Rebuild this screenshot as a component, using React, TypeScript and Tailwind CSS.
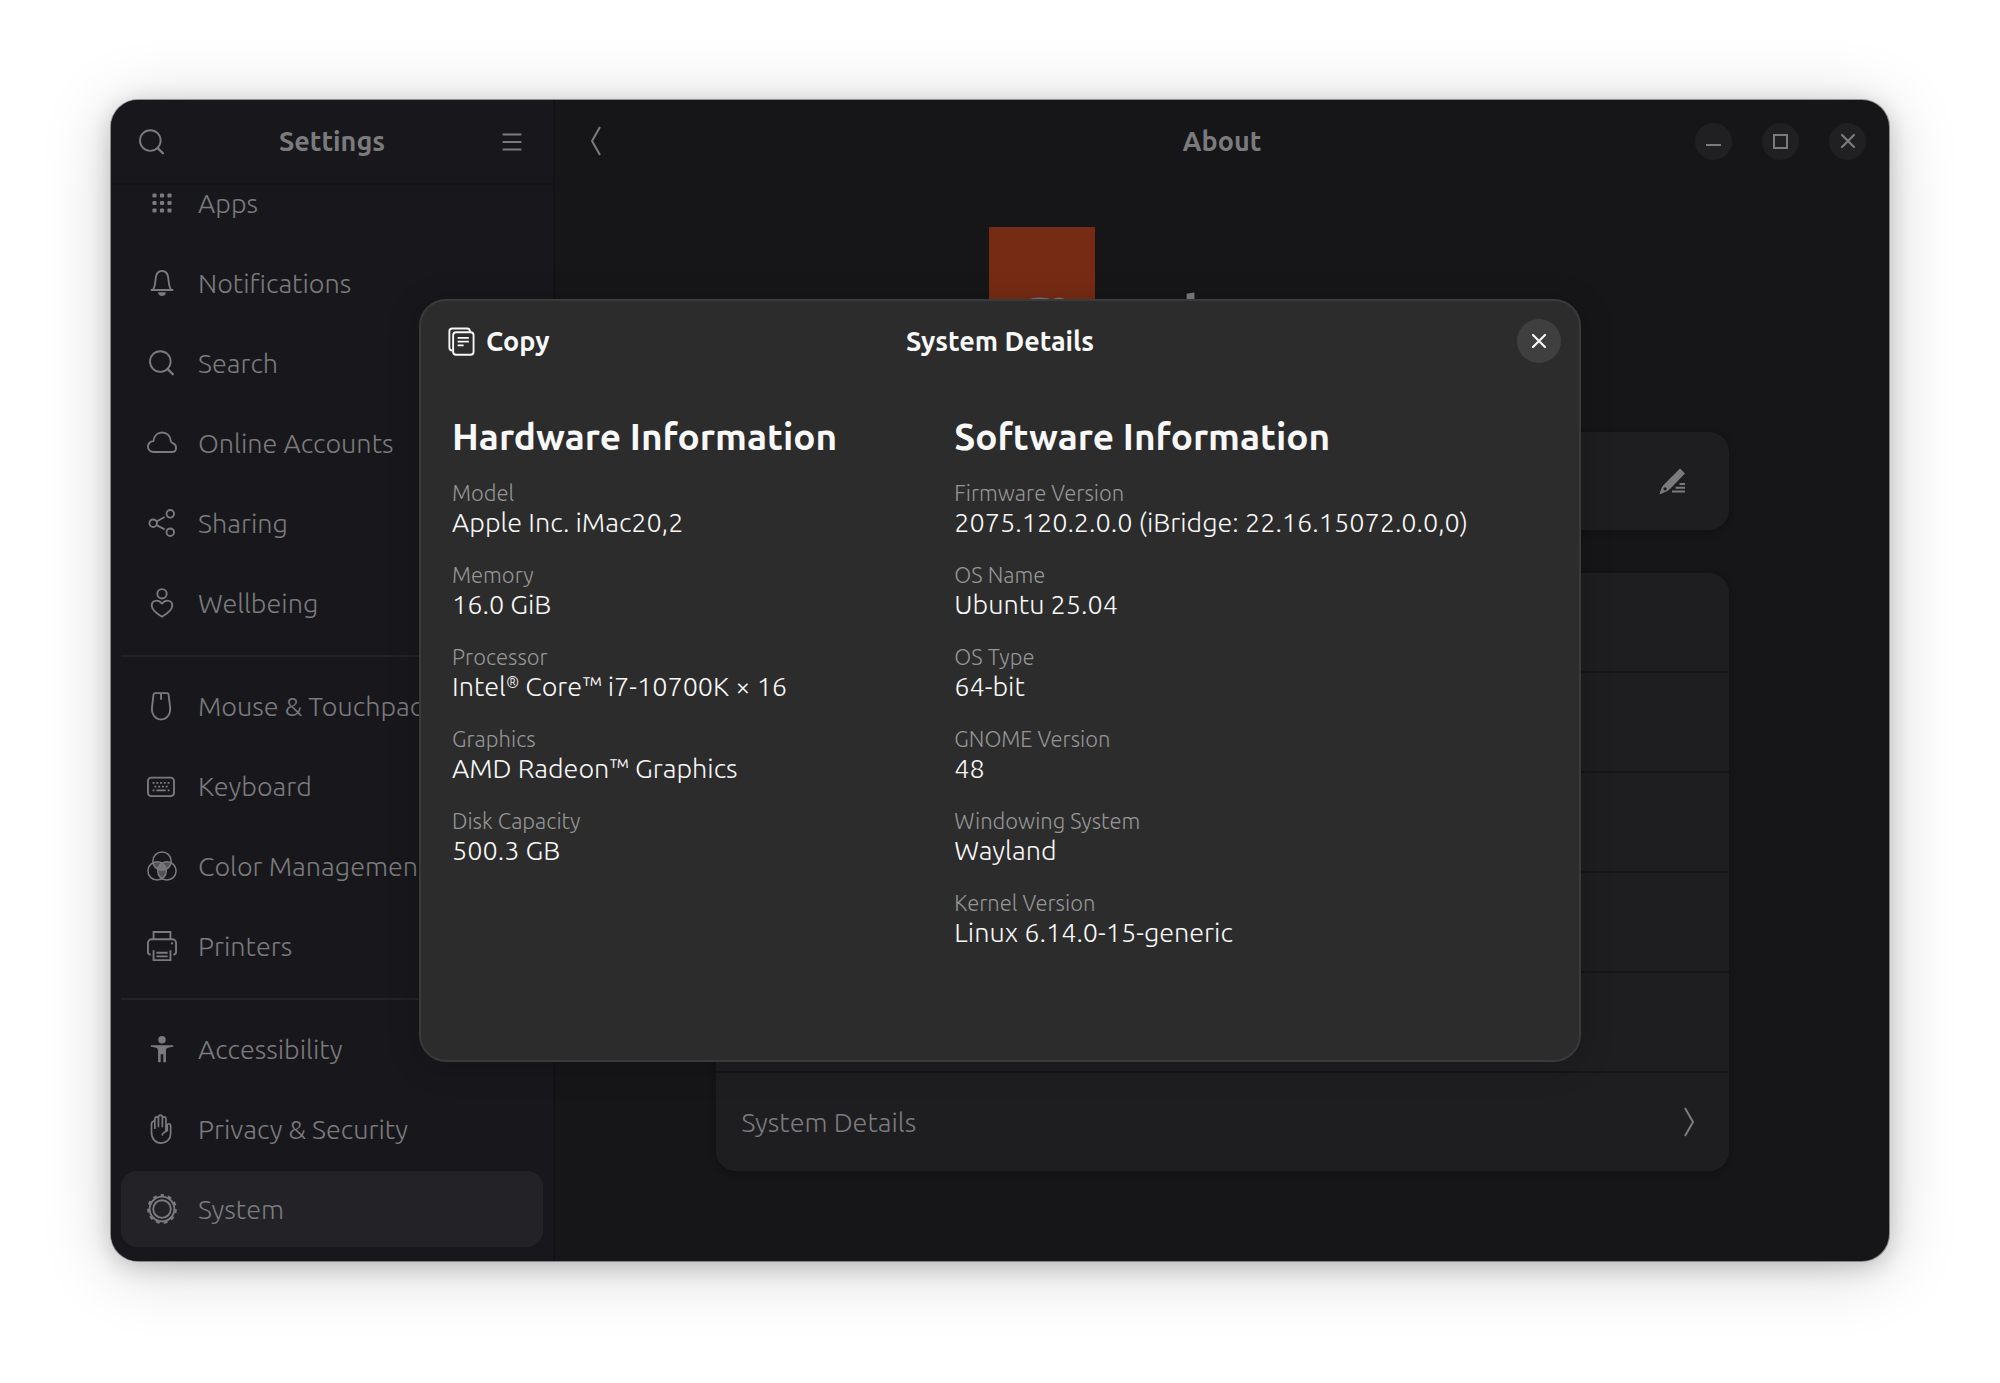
import type { ReactNode } from 'react';

function Icon({ children }: { children: ReactNode }) {
  return (
    <svg viewBox="0 0 16 16" fill="none" stroke="currentColor" strokeWidth="1" aria-hidden="true" className="size-[30px] shrink-0">
      {children}
    </svg>
  );
}

const SearchIcon = () => (
  <Icon>
    <circle cx="7.1" cy="7.2" r="5.5" />
    <path d="M11 11.2l2.8 2.8" strokeWidth="1.3" strokeLinecap="round" />
  </Icon>
);

const AppsIcon = () => (
  <Icon>
    {[4, 8, 12].map((y) => [4, 8, 12].map((x) => (
      <rect key={`${x}-${y}`} x={x - 1.1} y={y - 1.1} width="2.2" height="2.2" rx=".6" fill="currentColor" stroke="none" />
    )))}
  </Icon>
);

const BellIcon = () => (
  <Icon>
    <path d="M2 11.7h12M3.2 11.5C4.5 9.8 4.4 7 4.7 5 5 2.8 6.3 1.6 8 1.6S11 2.8 11.3 5c.3 2 .2 4.8 1.5 6.5" />
    <path d="M5.9 12.9h4.2c0 1.2-.9 2-2.1 2s-2.1-.8-2.1-2z" fill="currentColor" stroke="none" />
  </Icon>
);

const CloudIcon = () => (
  <Icon>
    <path d="M3.4 12.8a2.9 2.9 0 0 1 0-5.8C3.7 4.2 5.6 2.4 8 2.4c2.7 0 4.6 1.9 4.7 4.6.1.5.4.7 1.1 1.1 1 .5 1.7 1.2 1.7 2.4 0 1.4-1 2.3-2.3 2.3z" strokeLinejoin="round" />
  </Icon>
);

const ShareIcon = () => (
  <Icon>
    <circle cx="3.3" cy="8.1" r="2" />
    <circle cx="12.4" cy="3.1" r="2" />
    <circle cx="12.4" cy="12.9" r="2" />
    <path d="M5.1 7.2l4.3-2.4M5.1 9.1l4.3 2.3" />
  </Icon>
);

const WellbeingIcon = () => (
  <Icon>
    <circle cx="8" cy="3.1" r="2.5" />
    <path d="M8 15.3C5.6 13.9 2.5 11.8 2.5 9.3c0-1.5 1.1-2.6 2.6-2.6 1.2 0 2.1.6 2.9 1.6.8-1 1.7-1.6 2.9-1.6 1.5 0 2.6 1.1 2.6 2.6 0 2.5-3.1 4.6-5.5 6z" strokeLinejoin="round" />
  </Icon>
);

const MouseIcon = () => (
  <Icon>
    <path d="M4.3 1.1h6.4q.7 0 .8.8l.8 6.6c.5 4-1.9 6.7-4.8 6.7s-5.3-2.7-4.8-6.7l.8-6.6q.1-.8.8-.8zM7.5 1v3.7" />
  </Icon>
);

const KeyboardIcon = () => (
  <Icon>
    <rect x=".5" y="3.5" width="13.9" height="9.9" rx="1.8" />
    <path d="M3 6.3h1m1 0h1m1 0h1m1 0h1m1 0h1M4 8.3h1m1 0h1m1 0h1m1 0h1M3 10.3h1m1 0h5m1 0h1" />
  </Icon>
);

const ColorIcon = () => (
  <Icon>
    <clipPath id="colorTop"><circle cx="8" cy="5.4" r="4.9" /></clipPath>
    <clipPath id="colorLeft"><circle cx="5.4" cy="10.6" r="4.9" /></clipPath>
    <g fill="currentColor" fillOpacity=".6" stroke="none">
      <circle cx="5.4" cy="10.6" r="4.9" clipPath="url(#colorTop)" />
      <circle cx="10.6" cy="10.6" r="4.9" clipPath="url(#colorTop)" />
      <circle cx="10.6" cy="10.6" r="4.9" clipPath="url(#colorLeft)" />
    </g>
    <g strokeWidth=".8">
      <circle cx="8" cy="5.4" r="4.9" />
      <circle cx="5.4" cy="10.6" r="4.9" />
      <circle cx="10.6" cy="10.6" r="4.9" />
    </g>
  </Icon>
);

const PrinterIcon = () => (
  <Icon>
    <path d="M3.5 4.4V.5h9v3.9M2 12.6c-.9 0-1.5-.6-1.5-1.5V6.4c0-1.1.9-2 2-2h11c1.1 0 2 .9 2 2v4.7c0 .9-.6 1.5-1.5 1.5M3.5 10.2v5.3h9v-5.3M5 11.6h6M5 13.5h6" />
    <circle cx="13.3" cy="6.6" r=".6" fill="currentColor" stroke="none" />
  </Icon>
);

const AccessibilityIcon = () => (
  <Icon>
    <g fill="currentColor" stroke="none">
      <circle cx="8" cy="3" r="2" />
      <path d="M2 6h12v.8c-1.5.2-3 .4-3.5.9-.4.4-.4 1-.4 1.8V15H8.7v-4.2H7.3V15H5.9V9.5c0-.8 0-1.4-.4-1.8C5 7.2 3.5 7 2 6.8z" />
    </g>
  </Icon>
);

const HandIcon = () => (
  <Icon>
    <path
      d="M4.2 8V3.6c-1 .1-1.8.7-1.8 1.7v4.6c0 3.3 2.1 5.6 5.1 5.6s5.1-2.1 5.1-5V6.3c0-.7-.4-1.1-.9-1.1s-.9.4-.9 1.1v2.5L8.9 10c-.5.3-.8.8-.8 1.5M4.2 8V2.6c0-.7.4-1.1.9-1.1s1 .4 1 1.1V7M6.100 7V1.700c0-.7.4-1.1 1-1.1s1.1.4 1.1 1.1V7M8.2 2.5c0-.6.4-1 1-1s.9.4.9 1.1v6.2"
      strokeWidth=".9"
    />
  </Icon>
);

const GearIcon = () => (
  <Icon>
    <circle cx="8" cy="8" r="6.6" />
    <circle cx="8" cy="8" r="7.3" strokeWidth="1.3" strokeDasharray="2 2.17" strokeDashoffset="1" transform="rotate(-90 8 8)" />
    <circle cx="8" cy="8" r="4.7" />
  </Icon>
);

const MenuIcon = () => (
  <Icon>
    <path d="M3 4h10M3 8h10M3 12h10" />
  </Icon>
);

const CopyIcon = () => (
  <Icon>
    <rect x="3.8" y="3.3" width="10.9" height="12" rx="1.6" />
    <path d="M3.5 13.1c-1 0-1.7-.6-1.7-1.6V2.8c0-.9.6-1.5 1.5-1.5h7.9c1 0 1.6.6 1.6 1.8M6.2 6.3h6M6.2 8.3h6M6.2 10.3h3.2" />
  </Icon>
);

const CloseIcon = () => (
  <svg viewBox="0 0 16 16" fill="none" stroke="currentColor" strokeWidth="2.2" strokeLinecap="round" aria-hidden="true" className="size-4">
    <path d="M2 2l12 12M14 2L2 14" />
  </svg>
);

const groups = [
  [
    { label: 'Apps', icon: <AppsIcon /> },
    { label: 'Notifications', icon: <BellIcon /> },
    { label: 'Search', icon: <SearchIcon /> },
    { label: 'Online Accounts', icon: <CloudIcon /> },
    { label: 'Sharing', icon: <ShareIcon /> },
    { label: 'Wellbeing', icon: <WellbeingIcon /> },
  ],
  [
    { label: 'Mouse & Touchpad', icon: <MouseIcon /> },
    { label: 'Keyboard', icon: <KeyboardIcon /> },
    { label: 'Color Management', icon: <ColorIcon /> },
    { label: 'Printers', icon: <PrinterIcon /> },
  ],
  [
    { label: 'Accessibility', icon: <AccessibilityIcon /> },
    { label: 'Privacy & Security', icon: <HandIcon /> },
    { label: 'System', icon: <GearIcon />, active: true },
  ],
];

const hardware: [string, ReactNode][] = [
  ['Model', 'Apple Inc. iMac20,2'],
  ['Memory', '16.0 GiB'],
  ['Processor', <>Intel<sup className="text-base leading-none">®</sup> Core™ i7-10700K × 16</>],
  ['Graphics', 'AMD Radeon™ Graphics'],
  ['Disk Capacity', '500.3 GB'],
];

const software: [string, ReactNode][] = [
  ['Firmware Version', '2075.120.2.0.0 (iBridge: 22.16.15072.0.0,0)'],
  ['OS Name', 'Ubuntu 25.04'],
  ['OS Type', '64-bit'],
  ['GNOME Version', '48'],
  ['Windowing System', 'Wayland'],
  ['Kernel Version', 'Linux 6.14.0-15-generic'],
];

function Sidebar() {
  return (
    <aside className="flex w-[444px] shrink-0 flex-col border-r-2 border-[#121215] bg-[#18181c]">
      <header className="flex h-[85px] shrink-0 items-center justify-between border-b-2 border-[#131316] px-[26px]">
        <button aria-label="Search settings"><SearchIcon /></button>
        <h1 className="font-semibold">Settings</h1>
        <button aria-label="Main menu"><MenuIcon /></button>
      </header>

      {/* scrolled to the end, the first rows slide under the header */}
      <nav className="flex min-h-0 flex-1 flex-col justify-end overflow-hidden px-[10px] pb-[14px]">
        {groups.map((items, i) => (
          <ul key={i} className={i > 0 ? 'mt-[14px] flex flex-col gap-1 border-t-2 border-[#232327] pt-[11px]' : 'flex flex-col gap-1'}>
            {items.map((item) => (
              <li key={item.label}>
                <a
                  href="#"
                  aria-current={'active' in item ? 'page' : undefined}
                  className={`flex h-[76px] items-center gap-[21px] whitespace-nowrap rounded-2xl px-[26px] ${'active' in item ? 'bg-[#222227]' : ''}`}
                >
                  {item.icon}
                  {item.label}
                </a>
              </li>
            ))}
          </ul>
        ))}
      </nav>
    </aside>
  );
}

function WindowButton({ label, children }: { label: string; children: ReactNode }) {
  return (
    <button aria-label={label} className="flex size-[37px] items-center justify-center rounded-full bg-[#202022]">
      {children}
    </button>
  );
}

function UbuntuLogo() {
  return (
    <div className="flex h-[162px] items-start justify-center gap-[13px]">
      <svg viewBox="0 0 106 150" className="h-[150px] w-[106px]" aria-hidden="true">
        <rect width="106" height="150" fill="#762b14" />
        <circle cx="51" cy="108" r="33" fill="none" stroke="#77767a" strokeWidth="9" />
        <g fill="#77767a" stroke="#762b14" strokeWidth="3">
          <circle cx="70" cy="81" r="12" />
          <circle cx="18" cy="108" r="12" />
          <circle cx="70" cy="135" r="12" />
        </g>
      </svg>
      <span className="pt-10 text-[103px] font-normal leading-[136px]">Ubuntu</span>
    </div>
  );
}

function AboutPage() {
  return (
    <main className="flex min-w-0 flex-1 flex-col">
      <header className="flex h-[82px] shrink-0 items-center px-[23px]">
        <div className="flex flex-1">
          <button aria-label="Back">
            <svg viewBox="0 0 30 30" fill="none" stroke="currentColor" strokeWidth="2" className="size-[30px]">
              <path d="M22 1l-8 14 8 14" />
            </svg>
          </button>
        </div>
        <h2 className="font-semibold">About</h2>
        <div className="flex flex-1 justify-end gap-[30px]">
          <WindowButton label="Minimize">
            <span className="mt-2 h-0.5 w-[15px] bg-current" />
          </WindowButton>
          <WindowButton label="Maximize">
            <span className="size-[15px] border-2 border-current" />
          </WindowButton>
          <WindowButton label="Close"><CloseIcon /></WindowButton>
        </div>
      </header>

      <div className="mx-auto flex w-full max-w-[1013px] flex-col gap-[43px] pt-[45px]">
        <UbuntuLogo />

        <div className="flex h-[98px] items-center justify-end rounded-[20px] bg-[#1e1e20] px-[43px] shadow-[0_2px_4px_2px_#131314]">
          <button aria-label="Edit device name">
            <svg viewBox="0 0 27 27" fill="currentColor" className="size-[27px]">
              <path d="M21 .5l5 5-14.500 15C9 23 5.500 24.500.5 26.500 1.500 22 3 18.500 5.500 16zM6 19.200a1.700 1.700 0 1 0 .1 3.400 1.700 1.700 0 0 0-.1-3.400z" fillRule="evenodd" />
              <path d="M20.500 15H26v2h-5.500zM16.500 18.700H26v2h-9.500zM13 22.500h13v2H13z" />
            </svg>
          </button>
        </div>

        <ul className="flex flex-col gap-0.5 overflow-hidden rounded-[20px] bg-[#161618] shadow-[0_2px_4px_2px_#131314]">
          {[0, 1, 2, 3, 4].map((i) => <li key={i} className="h-[98px] bg-[#1e1e20]" />)}
          <li>
            <button className="flex h-[98px] w-full items-center justify-between bg-[#1e1e20] pl-[26px] pr-[33px]">
              System Details
              <svg viewBox="0 0 12 30" fill="none" stroke="currentColor" strokeWidth="2" className="h-[30px] w-3">
                <path d="M1 1l8 14-8 14" />
              </svg>
            </button>
          </li>
        </ul>
      </div>
    </main>
  );
}

function InfoColumn({ title, rows }: { title: string; rows: [string, ReactNode][] }) {
  return (
    <section>
      <h3 className="mb-[19px] text-[37px] font-bold leading-[48px]">{title}</h3>
      <dl className="flex flex-col gap-[23px]">
        {rows.map(([label, value]) => (
          <div key={label}>
            <dt className="text-[22px] leading-[26px] text-[#959595]">{label}</dt>
            <dd className="leading-[33px]">{value}</dd>
          </div>
        ))}
      </dl>
    </section>
  );
}

function SystemDetailsDialog() {
  return (
    <div
      role="dialog"
      aria-label="System Details"
      className="w-full max-w-[1162px] rounded-[27px] border-2 border-[#3a3a3a] bg-[#2c2c2c] text-[#f8f8f8] shadow-[0_4px_30px_4px_rgba(0,0,0,0.15)]"
    >
      <header className="flex h-20 items-center px-[18px]">
        <div className="flex flex-1">
          <button className="flex items-center gap-[10px] pl-[7px] font-semibold">
            <CopyIcon />
            Copy
          </button>
        </div>
        <h2 className="font-semibold">System Details</h2>
        <div className="flex flex-1 justify-end">
          <button aria-label="Close dialog" className="flex size-11 items-center justify-center rounded-full bg-[#3f3f3f]">
            <CloseIcon />
          </button>
        </div>
      </header>

      <div className="grid grid-cols-[11fr_13fr] px-[31px] pb-[111px] pt-8">
        <InfoColumn title="Hardware Information" rows={hardware} />
        <InfoColumn title="Software Information" rows={software} />
      </div>
    </div>
  );
}

export default function App() {
  return (
    <div className="flex h-screen bg-white px-[111px] pb-[122px] pt-[100px] font-['Ubuntu','Noto_Sans',sans-serif] text-[27px] font-light text-[#7b7b7d]">
      <div className="relative flex min-w-0 flex-1 overflow-hidden rounded-[27px] bg-[#161618] shadow-[0_0_0_1px_rgba(0,0,0,0.35),0_5px_24px_rgba(0,0,0,0.2),0_8px_70px_rgba(0,0,0,0.18)]">
        <Sidebar />
        <AboutPage />
        <div className="absolute inset-0 flex items-center justify-center">
          <SystemDetailsDialog />
        </div>
      </div>
    </div>
  );
}
